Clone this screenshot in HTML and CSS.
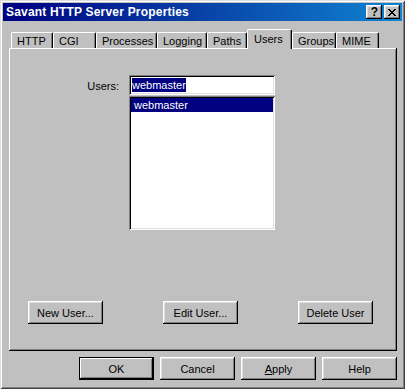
FILE: index.html
```html
<!DOCTYPE html>
<html lang="en">
<head>
    <meta charset="UTF-8">
    <title>Savant HTTP Server Properties</title>
    <link rel="stylesheet" href="styles.css">
</head>
<body>
    <div class="window">
        <div class="titlebar">
            <span class="title">Savant HTTP Server Properties</span>
            <div class="title-buttons">
                <div class="tb-btn help-btn">?</div>
                <div class="tb-btn">
                    <svg width="8" height="7" viewBox="0 0 8 7">
                        <path d="M0 0h2v1h1v1h2v-1h1v-1h2v1h-1v1h-1v1h-1v1h1v1h1v1h1v1h-2v-1h-1v-1h-2v1h-1v1h-2v-1h1v-1h1v-1h1v-1h-1v-1h-1v-1h-1z" fill="#000"/>
                    </svg>
                </div>
            </div>
        </div>

        <div class="content">
            <div class="tabs">
                <div class="tab" style="width: 42px">HTTP</div>
                <div class="tab" style="width: 43px">CGI</div>
                <div class="tab" style="width: 61px">Processes</div>
                <div class="tab" style="width: 50px">Logging</div>
                <div class="tab" style="width: 40px">Paths</div>
                <div class="tab active" style="width: 45px">Users</div>
                <div class="tab" style="width: 44px">Groups</div>
                <div class="tab" style="width: 43px">MIME</div>
            </div>

            <div class="panel">
                <div class="field">
                    <label class="field-label">Users:</label>
                    <div class="field-controls">
                        <div class="textbox"><span class="selected-text">webmaster</span></div>
                        <div class="listbox">
                            <div class="list-item selected">webmaster</div>
                        </div>
                    </div>
                </div>

                <div class="panel-buttons">
                    <button class="btn">New User...</button>
                    <button class="btn">Edit User...</button>
                    <button class="btn">Delete User</button>
                </div>
            </div>

            <div class="dialog-buttons">
                <button class="btn default">OK</button>
                <button class="btn">Cancel</button>
                <button class="btn"><u>A</u>pply</button>
                <button class="btn">Help</button>
            </div>
        </div>
    </div>
</body>
</html>
```

FILE: styles.css
```css
body {
    margin: 0;
    background: #c0c0c0;
    font-family: 'Liberation Sans', Arial, sans-serif;
    font-size: 11px;
    color: #000;
}

.window {
    width: 405px;
    height: 389px;
    box-sizing: border-box;
    padding: 3px;
    background: #c0c0c0;
    box-shadow: inset 1px 1px #dfdfdf, inset -1px -1px #404040,
                inset 2px 2px #fff, inset -2px -2px #808080;
}

.titlebar {
    height: 18px;
    display: flex;
    align-items: center;
    justify-content: space-between;
    padding: 0 2px 0 3px;
    background: linear-gradient(to right, #000080, #1084d0);
}

.title {
    color: #fff;
    font-weight: bold;
    font-size: 12px;
    letter-spacing: 0.2px;
}

.title-buttons {
    display: flex;
    gap: 2px;
}

.tb-btn {
    width: 16px;
    height: 14px;
    box-sizing: border-box;
    display: flex;
    align-items: center;
    justify-content: center;
    background: #c0c0c0;
    box-shadow: inset -1px -1px #000, inset 1px 1px #fff,
                inset -2px -2px #808080, inset 2px 2px #dfdfdf;
}

.help-btn {
    font-weight: bold;
    font-size: 12px;
    line-height: 14px;
    padding-left: 1px;
}

.content {
    padding: 8px 2px 0 6px;
}

.tabs {
    display: flex;
    align-items: flex-end;
    height: 19px;
    padding-left: 2px;
}

.tab {
    box-sizing: border-box;
    height: 16px;
    line-height: 14px;
    padding: 1px 0 0 5px;
    border-top: 1px solid #fff;
    border-left: 1px solid #fff;
    border-right: 1px solid #000;
    border-radius: 2px 2px 0 0;
    box-shadow: inset -1px 0 #808080;
    white-space: nowrap;
}

.tab.active {
    position: relative;
    z-index: 1;
    height: 20px;
    margin-bottom: -1px;
    padding: 2px 0 0 6px;
    background: #c0c0c0;
}

.panel {
    height: 303px;
    box-sizing: border-box;
    width: 388px;
    display: flex;
    flex-direction: column;
    justify-content: space-between;
    padding: 27px 0 27px 19px;
    box-shadow: inset -1px -1px #000, inset 1px 1px #fff,
                inset -2px -2px #808080;
}

.field {
    display: flex;
}

.field-label {
    width: 91px;
    padding: 5px 10px 0 0;
    text-align: right;
}

.field-controls {
    display: flex;
    flex-direction: column;
    gap: 1px;
}

.textbox, .listbox {
    width: 146px;
    box-sizing: border-box;
    background: #fff;
    padding: 2px;
    box-shadow: inset 1px 1px #808080, inset -1px -1px #fff,
                inset 2px 2px #000, inset -2px -2px #dfdfdf;
}

.textbox {
    height: 20px;
    padding: 2px 3px;
    line-height: 16px;
}

.selected-text {
    background: #000080;
    color: #fff;
    display: inline-block;
    line-height: 14px;
}

.listbox {
    height: 134px;
}

.list-item {
    height: 14px;
    line-height: 14px;
    padding-left: 3px;
}

.list-item.selected {
    background: #000080;
    color: #fff;
}

.panel-buttons {
    display: flex;
    gap: 60px;
}

.btn {
    width: 75px;
    height: 23px;
    font-family: inherit;
    font-size: 11px;
    color: #000;
    background: #c0c0c0;
    border: none;
    padding: 0;
    box-shadow: inset -1px -1px #000, inset 1px 1px #fff,
                inset -2px -2px #808080, inset 2px 2px #dfdfdf;
}

.btn.default {
    box-shadow: inset 0 0 0 1px #000, inset -2px -2px #000, inset 2px 2px #fff,
                inset -3px -3px #808080;
}

.dialog-buttons {
    display: flex;
    justify-content: flex-end;
    gap: 6px;
    width: 388px;
    margin-top: 6px;
}
```
